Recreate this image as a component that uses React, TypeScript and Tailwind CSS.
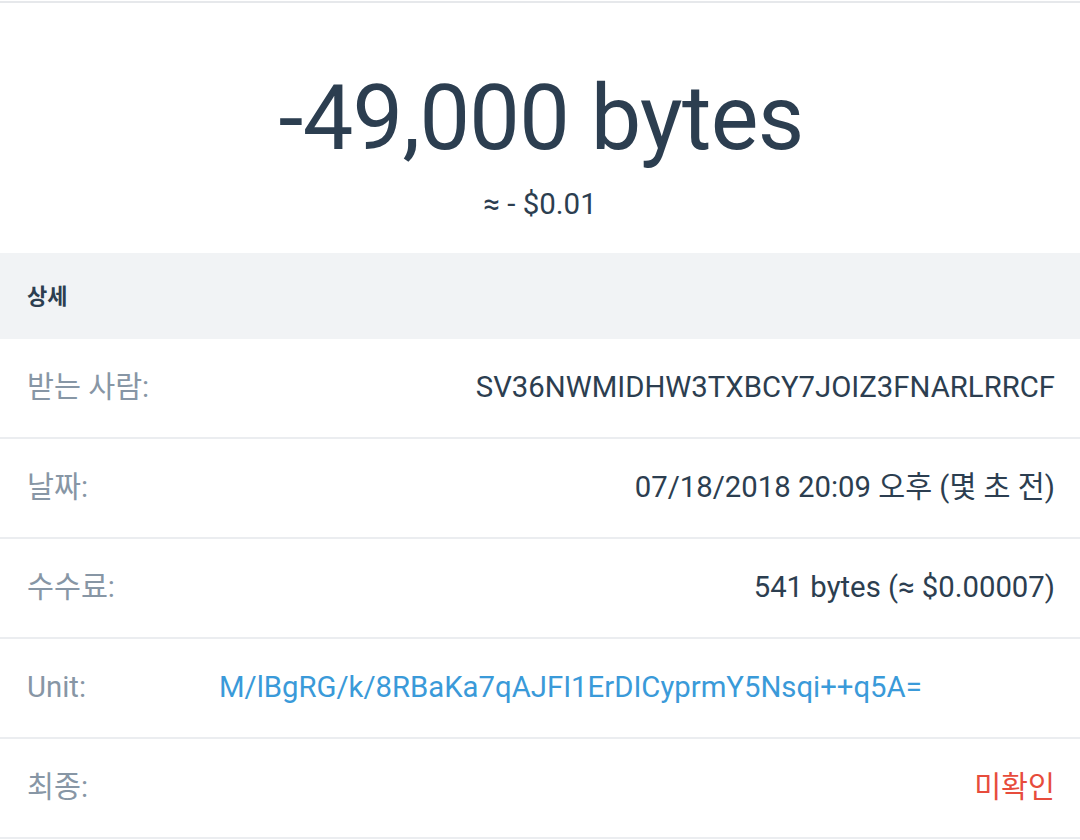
import React from "react";

const rows: { label: string; value: string; kind?: "unit" | "red" }[] = [
  { label: "받는 사람:", value: "SV36NWMIDHW3TXBCY7JOIZ3FNARLRRCF" },
  { label: "날짜:", value: "07/18/2018 20:09 오후 (몇 초 전)" },
  { label: "수수료:", value: "541 bytes (≈ $0.00007)" },
  { label: "Unit:", value: "M/lBgRG/k/8RBaKa7qAJFI1ErDICyprmY5Nsqi++q5A=", kind: "unit" },
  { label: "최종:", value: "미확인", kind: "red" },
];

export default function App() {
  return (
    <div
      className="w-[1080px] h-[840px] bg-white overflow-hidden"
      style={{ fontFamily: 'Roboto, "Noto Sans CJK KR", sans-serif' }}
    >
      <div className="h-[2px] mt-[1px] bg-[#e6e8eb]" />
      <div className="flex flex-col items-center pt-[66px] h-[250px]">
        <div className="text-[90px] leading-[100px] text-[#2c3e50] tracking-[-0.7px] pl-[2px]">-49,000 bytes</div>
        <div className="text-[29.5px] leading-[34px] text-[#2c3e50] mt-[18px]">≈ - $0.01</div>
      </div>
      <div className="h-[86px] bg-[#f1f3f5] flex items-center px-[27px]">
        <span className="text-[22px] font-semibold text-[#2c3e50]">상세</span>
      </div>
      {rows.map((r) => (
        <div
          key={r.label}
          className="h-[100px] flex items-center pl-[27px] pr-[25px] border-b-2 border-[#ebedf0] text-[29.3px]"
        >
          <span className="text-[#8796a5] w-[192px] shrink-0">{r.label}</span>
          {r.kind === "unit" ? (
            <span className="text-[#3a9ad9]">{r.value}</span>
          ) : (
            <span className={`ml-auto text-right ${r.kind === "red" ? "text-[#e74c3c]" : "text-[#2c3e50]"}`}>
              {r.value}
            </span>
          )}
        </div>
      ))}
    </div>
  );
}
